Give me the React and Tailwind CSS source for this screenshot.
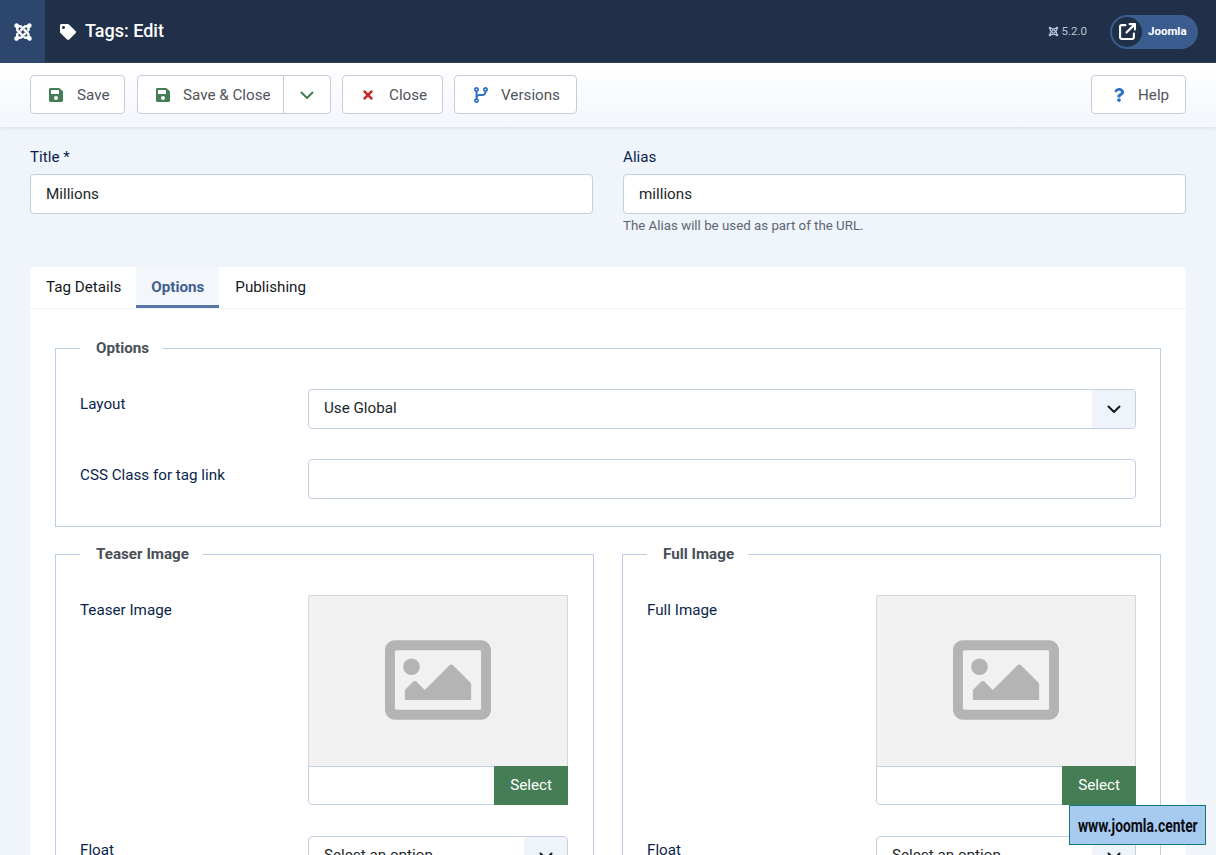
import React from "react";
import { FaJoomla, FaTag, FaSave, FaTimes, FaQuestion, FaRegImage } from "react-icons/fa";
import { FaArrowUpRightFromSquare, FaCodeBranch } from "react-icons/fa6";

function Chevron({ className }) {
  return (
    <svg viewBox="0 0 16 16" className={className} fill="none" stroke="currentColor" strokeWidth="2" strokeLinecap="round" strokeLinejoin="round">
      <path d="M2.5 5.5 8 11l5.5-5.5" />
    </svg>
  );
}

function ToolButton({ icon, label, className = "" }) {
  return (
    <button className={`h-[39px] flex items-center bg-white border border-[#c5ccd8] rounded-[4px] text-[15.2px] text-[#50555c] ${className}`}>
      {icon}
      <span className="pt-[2px]">{label}</span>
    </button>
  );
}

function TextInput({ value, className = "" }) {
  return (
    <div className={`h-[40px] flex items-center px-[15px] bg-white border border-[#c3cfe3] rounded-[4px] text-[15.2px] text-[#22262a] ${className}`}>
      {value}
    </div>
  );
}

function SelectBox({ value, className = "" }) {
  return (
    <div className={`h-[40px] flex items-center bg-white border border-[#c3cfe3] rounded-[4px] text-[15.2px] text-[#22262a] ${className}`}>
      <span className="flex-1 pl-[15px] pb-[2px]">{value}</span>
      <span className="w-[43px] h-full flex items-center justify-center bg-[#eff3fa] rounded-r-[4px]">
        <Chevron className="w-[16px] h-[16px] text-[#15191e]" />
      </span>
    </div>
  );
}

function Fieldset({ legend, className = "", children }) {
  return (
    <fieldset className={`border border-[#bdcde6] px-[24px] pt-[29px] pb-[27px] ${className}`}>
      <legend className="pl-[16px] pr-[14px] text-[15.2px] leading-[24px] font-bold text-[#495057]">{legend}</legend>
      {children}
    </fieldset>
  );
}

function ImageColumn({ title, labelWidth }) {
  return (
    <Fieldset legend={title} className="min-w-0">
      <div className="flex">
        <div className={`${labelWidth} shrink-0 text-[15.2px] leading-[24px] text-[#0b1f4b] pt-[3px]`}>{title}</div>
        <div className="w-[260px]">
          <div className="h-[171px] pb-[2px] flex items-center justify-center bg-[#f1f1f1] border border-[#d6d6d6] border-b-0 rounded-t-[2px]">
            <FaRegImage size={106} className="text-[#b4b4b4]" />
          </div>
          <div className="h-[39px] flex bg-white border border-[#c3cfe3] rounded-b-[4px]">
            <div className="flex-1" />
            <button className="w-[74px] -my-px -mr-px bg-[#457d54] text-[15.2px] text-white">Select</button>
          </div>
        </div>
      </div>
      <div className="flex mt-[31px]">
        <div className={`${labelWidth} shrink-0 text-[15.2px] leading-[24px] text-[#0b1f4b] pt-[2px]`}>Float</div>
        <SelectBox value="Select an option" className="w-[260px]" />
      </div>
    </Fieldset>
  );
}

export default function App() {
  return (
    <div className="relative h-[855px] overflow-hidden bg-[#f0f4fb] font-['Roboto',sans-serif]">
      {/* Header */}
      <header className="h-[63px] flex items-center bg-[#1f3048] text-white">
        <div className="w-[45px] h-full flex items-center justify-center bg-[#2c466d]">
          <FaJoomla size={20} />
        </div>
        <FaTag size={16} className="ml-[15px]" />
        <h1 className="ml-[9px] pb-[2px] text-[18px] font-medium">Tags: Edit</h1>
        <div className="ml-auto flex items-center gap-[3px] text-[11.5px] text-[#b9c4d4]">
          <FaJoomla size={11} />
          5.2.0
        </div>
        <div className="ml-[23px] mr-[18px] w-[88px] h-[34px] flex items-center rounded-full bg-[#3b5c8e]">
          <span className="w-[30px] h-[30px] ml-[2px] flex items-center justify-center rounded-full bg-[#1f3048]">
            <FaArrowUpRightFromSquare size={17} />
          </span>
          <span className="ml-[6px] pt-[1px] text-[11.5px] font-bold">Joomla</span>
        </div>
      </header>

      {/* Toolbar */}
      <div className="h-[64px] flex items-start pt-[12px] px-[30px] bg-gradient-to-b from-white to-[#f3f6fc] shadow-[0_1px_3px_rgba(190,205,230,0.5)]">
        <ToolButton
          className="w-[95px] pl-[17px]"
          icon={<FaSave size={16} className="text-[#457d54] mr-[13px]" />}
          label="Save"
        />
        <div className="ml-[12px] flex h-[39px] bg-white border border-[#c5ccd8] rounded-[4px] text-[15.2px] text-[#50555c]">
          <button className="w-[146px] flex items-center pl-[17px] border-r border-[#c5ccd8]">
            <FaSave size={16} className="text-[#457d54] mr-[12px]" />
            <span className="pt-[2px]">Save &amp; Close</span>
          </button>
          <button className="w-[46px] flex items-center justify-center text-[#457d54]">
            <Chevron className="w-[16px] h-[16px]" />
          </button>
        </div>
        <ToolButton
          className="ml-[11px] w-[101px] pl-[18px]"
          icon={<FaTimes size={14} className="text-[#c52827] mr-[14px]" />}
          label="Close"
        />
        <ToolButton
          className="ml-[11px] w-[123px] pl-[18px]"
          icon={<FaCodeBranch size={16} className="text-[#3071c4] mr-[12px]" />}
          label="Versions"
        />
        <ToolButton
          className="ml-auto w-[95px] pl-[20px]"
          icon={<FaQuestion size={14} className="text-[#3071c4] mr-[12px]" />}
          label="Help"
        />
      </div>

      {/* Title and alias */}
      <div className="grid grid-cols-[563px_563px] gap-x-[30px] px-[30px] pt-[18px]">
        <div>
          <label className="block text-[15.2px] leading-[24px] text-[#0b1f4b] mb-[5px]">Title *</label>
          <TextInput value="Millions" />
        </div>
        <div>
          <label className="block text-[15.2px] leading-[24px] text-[#0b1f4b] mb-[5px]">Alias</label>
          <TextInput value="millions" />
          <p className="mt-[2px] text-[13.3px] leading-[20px] text-[#5d6670]">The Alias will be used as part of the URL.</p>
        </div>
      </div>

      {/* Tab card */}
      <div className="mx-[30px] mt-[31px] bg-white rounded-t-[4px]">
        <div className="h-[42px] flex border-b border-[#eef2f9] text-[15.2px] text-[#15191e]">
          <div className="pl-[16px] pr-[15px] flex items-center">Tag Details</div>
          <div className="px-[15px] pt-[3px] flex items-center font-bold text-[#41608f] bg-[#f3f6fb] border-b-[3px] border-[#5b77a5] h-[41px]">Options</div>
          <div className="px-[16px] flex items-center">Publishing</div>
        </div>

        <div className="px-[25px] pt-[27px] flex flex-col gap-[15px]">
          <Fieldset legend="Options">
            <div className="flex">
              <div className="w-[228px] shrink-0 text-[15.2px] leading-[24px] text-[#0b1f4b] pt-[3px]">Layout</div>
              <SelectBox value="Use Global" className="flex-1" />
            </div>
            <div className="flex mt-[30px]">
              <div className="w-[228px] shrink-0 text-[15.2px] leading-[24px] text-[#0b1f4b] pt-[4px]">CSS Class for tag link</div>
              <TextInput value="" className="flex-1" />
            </div>
          </Fieldset>

          <div className="grid grid-cols-2 gap-x-[28px]">
            <ImageColumn title="Teaser Image" labelWidth="w-[228px]" />
            <ImageColumn title="Full Image" labelWidth="w-[229px]" />
          </div>
        </div>
      </div>

      {/* Watermark */}
      <div className="absolute left-[1069px] top-[805px] w-[137px] h-[40px] flex items-center justify-center bg-[#a7cbf0] border border-[#0e7c7b] text-[#0c0c14]">
        <span className="inline-block whitespace-nowrap scale-x-[0.77] text-[18px] font-bold">www.joomla.center</span>
      </div>
    </div>
  );
}
